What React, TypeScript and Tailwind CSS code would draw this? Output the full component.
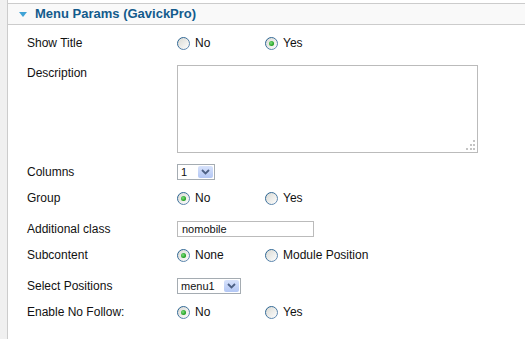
import React from "react";

function Radio({ checked }: { checked?: boolean }) {
  return (
    <svg width="13" height="13" viewBox="0 0 13 13" className="shrink-0">
      <defs>
        <linearGradient id="rb" x1="0" y1="0" x2="1" y2="1">
          <stop offset="0" stopColor="#1c5a8a" />
          <stop offset="1" stopColor="#6f93b8" />
        </linearGradient>
        <linearGradient id="rf" x1="0" y1="0" x2="1" y2="1">
          <stop offset="0" stopColor="#d8d8d2" />
          <stop offset="1" stopColor="#ffffff" />
        </linearGradient>
        <radialGradient id="rd" cx="0.4" cy="0.4" r="0.6">
          <stop offset="0" stopColor="#7ee07e" />
          <stop offset="1" stopColor="#1a9a1a" />
        </radialGradient>
      </defs>
      <circle cx="6.5" cy="6.5" r="6" fill="url(#rf)" stroke="url(#rb)" strokeWidth="1" />
      {checked && <circle cx="6.5" cy="6.5" r="2.5" fill="url(#rd)" />}
    </svg>
  );
}

function RadioGroup({ options, value }: { options: string[]; value: string }) {
  return (
    <div className="flex items-center">
      {options.map((o) => (
        <label key={o} className="flex w-[88px] items-center gap-[5px] whitespace-nowrap">
          <Radio checked={o === value} />
          <span>{o}</span>
        </label>
      ))}
    </div>
  );
}

function Select({ value, width }: { value: string; width: string }) {
  return (
    <div className={`flex h-[16px] items-center justify-between border border-[#a5acb2] bg-white pl-[3px] pr-[1px] text-[11px] ${width}`}>
      <span className="leading-none">{value}</span>
      <div className="flex h-[12px] w-[15px] items-center justify-center rounded-[2px] bg-gradient-to-b from-[#d7e2fb] to-[#b3c7f5]">
        <svg width="9" height="6" viewBox="0 0 9 6">
          <path d="M1 1 L4.5 4.5 L8 1" fill="none" stroke="#4d6185" strokeWidth="1.8" />
        </svg>
      </div>
    </div>
  );
}

function Row({ label, children, className = "" }: { label: string; children: React.ReactNode; className?: string }) {
  return (
    <div className={`flex h-[26px] items-center ${className}`}>
      <div className="w-[150px] shrink-0">{label}</div>
      {children}
    </div>
  );
}

export default function App() {
  return (
    <div
      className="flex h-[339px] w-[525px] bg-[#f0f0f0] text-[12px] text-[#111]"
      style={{ fontFamily: '"Liberation Sans", Arial, sans-serif' }}
    >
      <div className="w-[7px] shrink-0" />
      <div className="flex-1 border-l border-[#cccccc] bg-white">
        {/* Panel header */}
        <div className="h-[3px] bg-white" />
        <div className="flex h-[22px] items-center gap-[8px] border-y border-[#cccccc] bg-[#f9f9f9] pl-[11px]">
          <svg width="8" height="5" viewBox="0 0 8 5">
            <path d="M0 0 H8 L4 5 Z" fill="#3fa3d6" />
          </svg>
          <span className="text-[13px] font-bold text-[#135b8c]">Menu Params (GavickPro)</span>
        </div>

        {/* Params */}
        <div className="pl-[19px] pt-[5px]">
          <Row label="Show Title">
            <RadioGroup options={["No", "Yes"]} value="Yes" />
          </Row>

          <div className="flex h-[103px] items-start pt-[9px]">
            <div className="w-[150px] shrink-0 leading-[16px]">Description</div>
            <div className="relative h-[88px] w-[301px] border border-[#bbbbbb] bg-white">
              <svg width="11" height="11" viewBox="0 0 11 11" className="absolute bottom-[1px] right-[1px]">
                <g fill="#c4c4c4">
                  <rect x="8" y="0" width="2" height="2" />
                  <rect x="5" y="4" width="2" height="2" />
                  <rect x="8" y="4" width="2" height="2" />
                  <rect x="1" y="8" width="2" height="2" />
                  <rect x="5" y="8" width="2" height="2" />
                  <rect x="8" y="8" width="2" height="2" />
                </g>
              </svg>
            </div>
          </div>

          <Row label="Columns">
            <Select value="1" width="w-[38px]" />
          </Row>
          <Row label="Group">
            <RadioGroup options={["No", "Yes"]} value="No" />
          </Row>
          <Row label="Additional class" className="mt-[5px]">
            <div className="flex h-[16px] w-[137px] items-center border border-[#bbbbbb] pl-[4px] text-[11px]">
              nomobile
            </div>
          </Row>
          <Row label="Subcontent">
            <RadioGroup options={["None", "Module Position"]} value="None" />
          </Row>
          <Row label="Select Positions" className="mt-[5px]">
            <Select value="menu1" width="w-[64px]" />
          </Row>
          <Row label="Enable No Follow:">
            <RadioGroup options={["No", "Yes"]} value="No" />
          </Row>
        </div>
      </div>
    </div>
  );
}
